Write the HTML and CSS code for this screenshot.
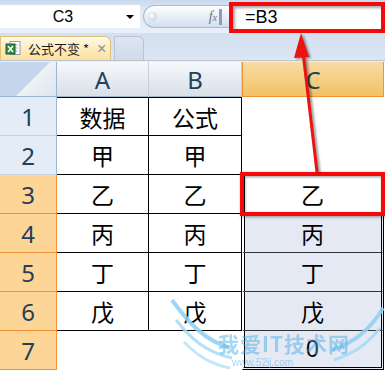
FILE: index.html
```html
<!DOCTYPE html>
<html lang="zh-CN">
<head>
    <meta charset="UTF-8">
    <title>公式不变</title>
    <link rel="stylesheet" href="styles.css">
</head>
<body>
    <div class="app">
        <div class="formula-bar">
            <div class="namebox">
                <span class="ref">C3</span>
                <span class="drop"></span>
            </div>
            <div class="pill">
                <span class="knob"></span>
                <span class="fx">f<sub>x</sub></span>
            </div>
            <div class="formula">=B3</div>
        </div>

        <div class="tabs">
            <div class="tab active">
                <svg class="xls" width="17" height="17" viewBox="0 0 17 17">
                    <rect x="5" y="1.5" width="10" height="13" fill="#fff" stroke="#8aa0b8"/>
                    <line x1="8" y1="5" x2="13" y2="5" stroke="#9fb3c8"/>
                    <line x1="8" y1="8" x2="13" y2="8" stroke="#9fb3c8"/>
                    <line x1="8" y1="11" x2="13" y2="11" stroke="#9fb3c8"/>
                    <rect x="1" y="4" width="9" height="10" fill="#2f8a3a" stroke="#1c6228"/>
                    <path d="M3 6 L8 12 M8 6 L3 12" stroke="#fff" stroke-width="1.6"/>
                </svg>
                <span class="tab-name">公式不变 *</span>
                <span class="close">×</span>
            </div>
            <div class="tab blank"></div>
        </div>
        <div class="split"></div>

        <div class="sheet">
            <div class="corner"></div>
            <div class="ch">A</div>
            <div class="ch">B</div>
            <div class="ch sel">C</div>

            <div class="rh">1</div>
            <div class="cell t top">数据</div>
            <div class="cell t top">公式</div>
            <div class="cell"></div>

            <div class="rh">2</div>
            <div class="cell t">甲</div>
            <div class="cell t">甲</div>
            <div class="cell"></div>

            <div class="rh sel">3</div>
            <div class="cell t">乙</div>
            <div class="cell t">乙</div>
            <div class="cell c active-cell">乙</div>

            <div class="rh sel">4</div>
            <div class="cell t">丙</div>
            <div class="cell t">丙</div>
            <div class="cell c">丙</div>

            <div class="rh sel">5</div>
            <div class="cell t">丁</div>
            <div class="cell t">丁</div>
            <div class="cell c">丁</div>

            <div class="rh sel">6</div>
            <div class="cell t">戊</div>
            <div class="cell t">戊</div>
            <div class="cell c">戊</div>

            <div class="rh sel">7</div>
            <div class="cell"></div>
            <div class="cell"></div>
            <div class="cell c last">0</div>
        </div>

        <!-- annotations drawn over the sheet -->
        <div class="mark-cell"></div>
        <svg class="arrow" width="385" height="372" viewBox="0 0 385 372">
            <line x1="317" y1="172" x2="303" y2="52" stroke="#ee1111" stroke-width="3"/>
            <polygon points="301,33 294,58 309,57" fill="#ee1111"/>
        </svg>
        <div class="watermark">
            <svg class="wings" width="215" height="90" viewBox="0 0 215 90">
                <path d="M2 10 C20 35 35 50 60 58" stroke="#8fd0f2" stroke-width="4" fill="none"/>
                <path d="M6 30 C22 50 36 62 62 68" stroke="#a6dbf5" stroke-width="3" fill="none"/>
                <path d="M14 52 C28 66 40 74 60 78" stroke="#b8e3f7" stroke-width="3" fill="none"/>
                <path d="M213 18 C200 40 185 52 162 60" stroke="#8fd0f2" stroke-width="4" fill="none"/>
                <path d="M210 38 C196 56 182 64 164 70" stroke="#a6dbf5" stroke-width="3" fill="none"/>
            </svg>
            <span class="wm-title">我爱IT技术网</span>
            <span class="wm-url">www.52ij.com</span>
        </div>
    </div>
</body>
</html>
```

FILE: styles.css
```css
body {
    margin: 0;
    background: #ffffff;
    font-family: "Liberation Sans", "Noto Sans CJK SC", sans-serif;
}

.app {
    position: relative;
    width: 385px;
    height: 372px;
    overflow: hidden;
    background: #ffffff;
}

/* formula bar */

.formula-bar {
    display: flex;
    align-items: flex-start;
    height: 33px;
    box-sizing: border-box;
    padding-top: 5px;
    background: linear-gradient(#c8d8ec, #dfe9f5 30%, #e8eff8);
}

.namebox {
    display: flex;
    align-items: center;
    width: 140px;
    height: 23px;
    background: #ffffff;
}

.ref {
    flex: 1;
    text-align: center;
    font-size: 16px;
    color: #000;
}

.drop {
    width: 0;
    height: 0;
    margin-right: 6px;
    border-left: 4px solid transparent;
    border-right: 4px solid transparent;
    border-top: 4px solid #000;
}

.pill {
    display: flex;
    align-items: center;
    justify-content: space-between;
    margin-left: 3px;
    width: 86px;
    height: 23px;
    box-sizing: border-box;
    border: 1px solid #a7bbd4;
    border-right: none;
    border-radius: 12px 0 0 12px;
    background: linear-gradient(#ffffff, #e4ecf6 60%, #d2deee);
}

.knob {
    width: 9px;
    height: 9px;
    margin-left: 4px;
    border-radius: 50%;
    background: radial-gradient(circle at 40% 40%, #ffffff, #b9c2cc);
}

.fx {
    margin-right: 7px;
    font-family: "Liberation Serif", serif;
    font-style: italic;
    font-size: 14px;
    color: #6d7683;
    padding-right: 2px;
    border-right: 3px solid #8d9fb5;
}

.fx sub {
    font-size: 10px;
    vertical-align: 0;
}

.formula {
    flex: 1;
    margin-top: -3px;
    height: 31px;
    box-sizing: border-box;
    border: 4px solid #f40a0a;
    background: #ffffff;
    box-shadow: inset 2px 2px 3px rgba(0, 0, 0, 0.35);
    padding-left: 12px;
    font-size: 18px;
    line-height: 22px;
    color: #000;
}

/* sheet tabs */

.tabs {
    display: flex;
    align-items: flex-end;
    gap: 3px;
    height: 27px;
    background: linear-gradient(#d3e0f0, #dbe6f4);
}

.tab {
    height: 24px;
    box-sizing: border-box;
    border: 1px solid #b9c4d0;
    border-bottom: none;
    border-radius: 0 6px 0 0;
}

.tab.active {
    display: flex;
    align-items: center;
    width: 111px;
    padding-left: 4px;
    border-color: #e3c27a;
    background: linear-gradient(#fff9e6, #fdeab8 60%, #fce0a0);
}

.xls {
    flex: none;
}

.tab-name {
    margin-left: 6px;
    font-family: "Noto Sans CJK SC", sans-serif;
    font-size: 13px;
    color: #1a1a1a;
}

.close {
    margin-left: 8px;
    font-size: 16px;
    color: #8c8f94;
}

.tab.blank {
    width: 30px;
    background: linear-gradient(#dde6f1, #cfdaea);
}

.split {
    height: 2px;
    background: linear-gradient(#a9b3bf, #ffffff);
}

/* grid */

.sheet {
    display: grid;
    grid-template-columns: 57px 92px 93px 142px;
    grid-template-rows: 35px repeat(7, 39px);
}

.sheet > div {
    box-sizing: border-box;
    display: flex;
    align-items: center;
    justify-content: center;
}

.corner {
    border-right: 1px solid #9eb6ce;
    border-bottom: 1px solid #9eb6ce;
    background: linear-gradient(135deg, #c4d6ec 55%, #eef2f7 56%, #dde5ee);
}

.ch {
    font-family: "Noto Sans", sans-serif;
    font-size: 24px;
    color: #22405a;
    border-right: 1px solid #c5cfdb;
    border-bottom: 1px solid #9eb6ce;
    background: linear-gradient(#f6f8fb, #e4e9ef 60%, #d9e0e9);
}

.ch.sel {
    border: 1px solid #f29436;
    border-top: none;
    background: linear-gradient(#f9dba5, #f5cd80 60%, #f1c164);
}

.rh {
    font-family: "Noto Sans", sans-serif;
    font-size: 24px;
    color: #22405a;
    border-right: 1px solid #9eb6ce;
    border-bottom: 1px solid #c5d3e3;
    background: #e4ecf7;
}

.rh.sel {
    border-right-color: #f29436;
    border-bottom-color: #f29436;
    background: #fdd697;
}

.cell {
    font-family: "Noto Sans CJK SC", sans-serif;
    font-size: 23px;
    color: #000;
}

.cell.t {
    border-right: 1px solid #000;
    border-bottom: 1px solid #000;
}

.cell.top {
    border-top: 1px solid #000;
}

.cell.c {
    border-left: 2px solid #ffffff;
    border-right: 3px double #000;
    border-bottom: 1px solid #333;
    box-shadow: inset 1px 0 #000;
    background: #e5e9f3;
}

.cell.c.active-cell {
    background: #ffffff;
}

.cell.c.last {
    border-bottom: 3px double #000;
    font-family: "Liberation Sans", sans-serif;
}

/* annotations */

.mark-cell {
    position: absolute;
    left: 240px;
    top: 172px;
    width: 145px;
    height: 44px;
    box-sizing: border-box;
    border: 4px solid #f40a0a;
    box-shadow: 1px 1px 3px rgba(0, 0, 0, 0.4), inset 1px 1px 3px rgba(0, 0, 0, 0.4);
}

.arrow {
    position: absolute;
    left: 0;
    top: 0;
    filter: drop-shadow(2px 1px 1px rgba(0, 0, 0, 0.4));
}

.watermark {
    position: absolute;
    left: 170px;
    top: 290px;
    width: 215px;
    height: 82px;
    opacity: 0.85;
}

.wings {
    position: absolute;
    left: 0;
    top: 0;
}

.wm-title {
    position: absolute;
    left: 48px;
    top: 42px;
    font-family: "Noto Sans CJK SC", sans-serif;
    font-weight: bold;
    font-size: 21px;
    line-height: 22px;
    letter-spacing: 1px;
    color: rgba(70, 170, 230, 0.55);
}

.wm-url {
    position: absolute;
    left: 62px;
    top: 67px;
    font-size: 10px;
    line-height: 11px;
    color: rgba(70, 170, 230, 0.55);
}
```
